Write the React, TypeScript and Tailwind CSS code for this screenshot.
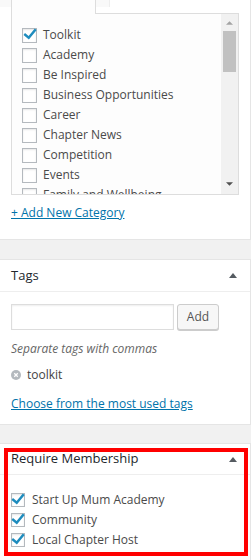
import { useState } from "react";

const categories = [
  "Toolkit",
  "Academy",
  "Be Inspired",
  "Business Opportunities",
  "Career",
  "Chapter News",
  "Competition",
  "Events",
  "Family and Wellbeing",
];

const memberships = ["Start Up Mum Academy", "Community", "Local Chapter Host"];

function CheckBox({ checked, size = "w-[15px] h-[15px]" }: { checked: boolean; size?: string }) {
  return (
    <span
      className={`${size} shrink-0 border border-[#b4b9be] bg-white shadow-[inset_0_1px_2px_rgba(0,0,0,0.1)] flex items-center justify-center overflow-visible`}
    >
      {checked && (
        <svg viewBox="0 0 20 20" className="w-[20px] h-[20px] shrink-0 -mt-[3px]">
          <path d="M14.8 4.6l1.9 1.5-7.8 9.4-5.4-4.6 1.5-1.8 3.6 3z" fill="#1e8cbe" />
        </svg>
      )}
    </span>
  );
}

function Toggle() {
  return (
    <svg viewBox="0 0 10 6" className="w-[8px] h-[5px]">
      <path d="M0 6 L5 0 L10 6 Z" fill="#555b61" />
    </svg>
  );
}

export default function App() {
  const [checked, setChecked] = useState<Record<string, boolean>>({ Toolkit: true });
  const [tag, setTag] = useState("");

  return (
    <div className="w-[251px] h-[560px] overflow-hidden bg-[#f1f1f1] font-['Open_Sans',sans-serif] text-[12px] text-[#444]">
      {/* Categories */}
      <section className="h-[240px] bg-white border-r border-b border-[#e5e5e5]">
        <div className="flex h-[14px]">
          <div className="w-[11px] bg-[#f9f9f9] h-[7px]" />
          <div className="w-[85px] border-x border-[#ddd] bg-[#fdfdfd]" />
          <div className="w-[143px] border-b border-[#ddd] flex">
            <div className="w-[14px] h-[7px] bg-[#f9f9f9] border-r border-[#eee]" />
          </div>
        </div>
        <div className="ml-[11px] w-[228px] h-[181px] flex border-x border-b border-[#ddd] bg-[#fdfdfd]">
          <ul className="flex-1 overflow-hidden pt-[11px] pl-[10px]">
            {categories.map((c) => (
              <li
                key={c}
                className="h-[20px] flex items-center gap-[6px] text-[#4a4a4a] cursor-pointer"
                onClick={() => setChecked({ ...checked, [c]: !checked[c] })}
              >
                <CheckBox checked={!!checked[c]} />
                <span className="whitespace-nowrap">{c}</span>
              </li>
            ))}
          </ul>
          <div className="w-[17px] bg-[#f1f1f1] flex flex-col items-center">
            <svg viewBox="0 0 8 4" className="w-[7px] h-[4px] mt-[7px]">
              <path d="M0 4 L4 0 L8 4 Z" fill="#a3a3a3" />
            </svg>
            <div className="w-[13px] h-[41px] bg-[#c1c1c1] mt-[6px]" />
            <div className="flex-1" />
            <svg viewBox="0 0 8 4" className="w-[7px] h-[4px] mb-[8px]">
              <path d="M0 0 L8 0 L4 4 Z" fill="#505050" />
            </svg>
          </div>
        </div>
        <a href="#" className="block ml-[11px] mt-[9px] w-fit text-[#0073aa] underline leading-[18px]">
          + Add New Category
        </a>
      </section>

      {/* Tags */}
      <section className="mt-[19px] h-[166px] bg-white border-y border-r border-[#e5e5e5]">
        <div className="h-[32px] border-b border-[#eee] flex items-center justify-between pl-[11px] pr-[13px]">
          <h2 className="text-[13px] text-[#23282d]">Tags</h2>
          <Toggle />
        </div>
        <div className="px-[11px] pt-[12px]">
          <div className="flex gap-[3px]">
            <input
              value={tag}
              onChange={(e) => setTag(e.target.value)}
              className="w-[163px] h-[26px] border border-[#ddd] bg-white shadow-[inset_0_1px_2px_rgba(0,0,0,0.07)] outline-none px-1"
            />
            <button className="w-[42px] h-[26px] border border-[#ccc] rounded-[3px] bg-[#f7f7f7] shadow-[0_1px_0_#ccc] text-[#555]">
              Add
            </button>
          </div>
          <p className="mt-[10px] italic text-[#666] leading-[18px]">Separate tags with commas</p>
          <div className="mt-[8px] flex items-center gap-[6px] leading-[18px]">
            <svg viewBox="0 0 20 20" className="w-[10px] h-[10px]">
              <circle cx="10" cy="10" r="10" fill="#b4b9be" />
              <path d="M6.5 6.5 L13.5 13.5 M13.5 6.5 L6.5 13.5" stroke="#fff" strokeWidth="2.6" />
            </svg>
            <span className="text-[#444]">toolkit</span>
          </div>
          <a href="#" className="block mt-[11px] w-fit text-[#0073aa] underline leading-[18px]">
            Choose from the most used tags
          </a>
        </div>
      </section>

      {/* Require Membership */}
      <section className="relative mt-[18px] h-[200px] bg-white border-t border-r border-[#e5e5e5]">
        <div className="h-[31px] border-b border-[#eee] flex items-center justify-between pl-[11px] pr-[13px]">
          <h2 className="text-[13px] text-[#23282d]">Require Membership</h2>
          <Toggle />
        </div>
        <ul className="pl-[11px] pt-[15px]">
          {memberships.map((m) => (
            <li key={m} className="h-[20px] flex items-center gap-[7px] text-[#4a4a4a]">
              <CheckBox checked size="w-[14px] h-[14px]" />
              <span className="whitespace-nowrap">{m}</span>
            </li>
          ))}
        </ul>
        <div className="absolute left-[4px] top-[4px] w-[244px] h-[108px] border-[4px] border-[#ff0000] pointer-events-none" />
      </section>
    </div>
  );
}
